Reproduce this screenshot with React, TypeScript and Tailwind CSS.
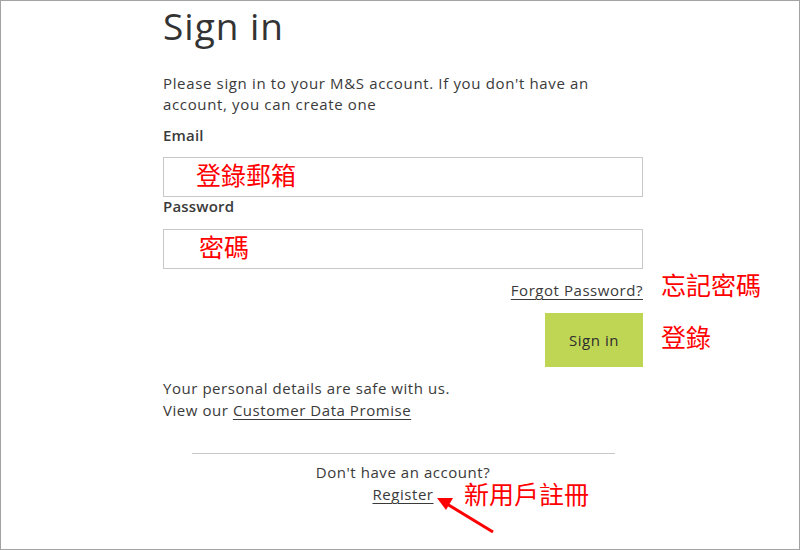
import React from "react";

export default function App() {
  const cjk = { fontFamily: '"Noto Sans CJK TC", "Noto Sans CJK SC", sans-serif' };
  return (
    <div
      className="relative w-[800px] h-[550px] border border-[#a3a3a3] bg-white overflow-hidden text-[#3a3a3a] tracking-[0.55px]"
      style={{ fontFamily: '"Open Sans", "Liberation Sans", sans-serif' }}
    >
      <div className="ml-[162px] w-[480px] flex flex-col">
        <h1 className="mt-[3px] text-[37px] leading-[44px] font-normal tracking-[1px] text-[#333]">Sign in</h1>
        <p className="mt-[25px] text-[15px] leading-[21px] whitespace-nowrap tracking-[0.65px]">
          Please sign in to your M&amp;S account. If you don't have an
          <br />
          account, you can create one
        </p>
        <div className="mt-[12px] text-[15px] leading-[16px] font-semibold tracking-[0.2px]">Email</div>
        <div className="mt-[14px] h-[40px] border border-[#c8c8c8]"></div>
        <div className="mt-[1px] text-[15px] leading-[16px] font-semibold tracking-[0.2px]">Password</div>
        <div className="mt-[15px] h-[40px] border border-[#c8c8c8]"></div>
        <div className="mt-[11px] flex justify-end">
          <span className="text-[15px] leading-[21px] underline underline-offset-[3px]">Forgot Password?</span>
        </div>
        <div className="mt-[12px] flex justify-end">
          <div className="w-[98px] h-[54px] bg-[#bfd655] flex items-center justify-center text-[15px] text-[#2d2d2d]">
            Sign in
          </div>
        </div>
        <p className="mt-[10px] text-[15px] leading-[22px]">
          Your personal details are safe with us.
          <br />
          View our <span className="underline underline-offset-[3px]">Customer Data Promise</span>
        </p>
        <div className="mt-[32px] mx-auto w-[423px] h-px bg-[#c8c8c8]"></div>
        <div className="mt-[7px] flex flex-col items-center text-[15px] leading-[22px]">
          <span>Don't have an account?</span>
          <span className="underline underline-offset-[3px]">Register</span>
        </div>
      </div>

      <div className="absolute left-[195px] top-[161px] text-[25px] leading-none tracking-normal text-[#ff0000]" style={cjk}>登錄郵箱</div>
      <div className="absolute left-[198px] top-[233px] text-[25px] leading-none tracking-normal text-[#ff0000]" style={cjk}>密碼</div>
      <div className="absolute left-[660px] top-[271px] text-[25px] leading-none tracking-normal text-[#ff0000]" style={cjk}>忘記密碼</div>
      <div className="absolute left-[660px] top-[323px] text-[25px] leading-none tracking-normal text-[#ff0000]" style={cjk}>登錄</div>
      <div className="absolute left-[463px] top-[480px] text-[25px] leading-none tracking-normal text-[#ff0000]" style={cjk}>新用戶註冊</div>

      <svg className="absolute left-0 top-0" width="800" height="550" style={{ pointerEvents: "none" }}>
        <line x1="492" y1="531" x2="446" y2="503" stroke="#ff0000" strokeWidth="3" />
        <polygon points="436,497 452,497 445,509" fill="#ff0000" />
      </svg>
    </div>
  );
}
